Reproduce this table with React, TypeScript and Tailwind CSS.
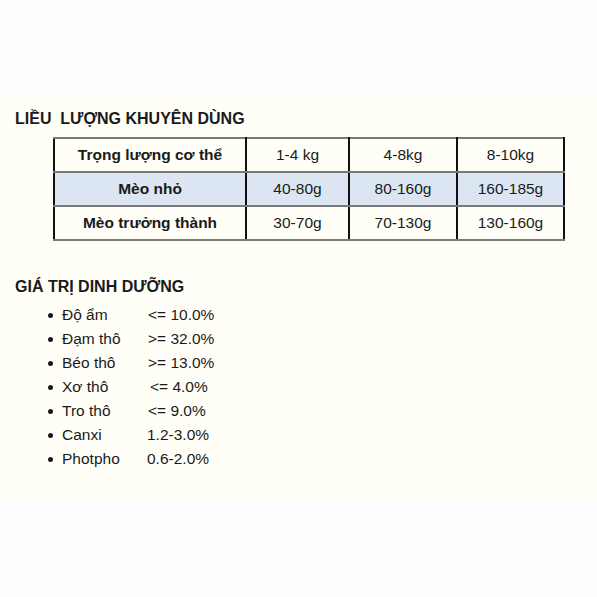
import React from 'react';

const rows = [
  { label: 'Trọng lượng cơ thể', values: ['1-4 kg', '4-8kg', '8-10kg'], shaded: false },
  { label: 'Mèo nhỏ', values: ['40-80g', '80-160g', '160-185g'], shaded: true },
  { label: 'Mèo trưởng thành', values: ['30-70g', '70-130g', '130-160g'], shaded: false },
];

const nutrients = [
  { name: 'Độ ẩm', value: '<= 10.0%', pad: 'pl-[1px]' },
  { name: 'Đạm thô', value: '>= 32.0%', pad: 'pl-[1px]' },
  { name: 'Béo thô', value: '>= 13.0%', pad: 'pl-[1px]' },
  { name: 'Xơ thô', value: '<= 4.0%', pad: 'pl-[3px]' },
  { name: 'Tro thô', value: '<= 9.0%', pad: 'pl-[1px]' },
  { name: 'Canxi', value: '1.2-3.0%', pad: 'pl-0' },
  { name: 'Photpho', value: '0.6-2.0%', pad: 'pl-0' },
];

export default function App() {
  return (
    <div className="w-full h-[597px] bg-[#fefefe] text-[#1a1a1a] font-['Liberation_Sans',Arial,sans-serif]">
      <div className="h-[93px]" />
      <div className="h-[407px] bg-[#fffff8] pl-[15px] pt-[16px]">
        <h2 className="text-[16px] font-bold leading-[20px] whitespace-pre">LIỀU  LƯỢNG KHUYÊN DÙNG</h2>

        <table className="ml-[38px] mt-[8px] border-collapse text-[15.5px]">
          <tbody>
            {rows.map((row) => (
              <tr key={row.label} className={row.shaded ? 'bg-[#dce6f2]' : ''}>
                <td className="w-[192px] h-[34px] border-y-2 border-y-[#7a7a7a] border-l-2 border-l-[#111] border-r-2 border-r-[#111] text-center font-bold">
                  {row.label}
                </td>
                <td className="w-[103px] h-[34px] border-y-2 border-y-[#7a7a7a] border-r-2 border-r-[#111] text-center">
                  {row.values[0]}
                </td>
                <td className="w-[108px] h-[34px] border-y-2 border-y-[#7a7a7a] border-r-2 border-r-[#111] text-center">
                  {row.values[1]}
                </td>
                <td className="w-[107px] h-[34px] border-y-2 border-y-[#7a7a7a] border-r-2 border-r-[#111] text-center">
                  {row.values[2]}
                </td>
              </tr>
            ))}
          </tbody>
        </table>

        <h2 className="mt-[36px] text-[16px] font-bold leading-[20px]">GIÁ TRỊ DINH DƯỠNG</h2>

        <ul className="mt-[6px] text-[15.5px] leading-[24px]">
          {nutrients.map((n) => (
            <li key={n.name} className="flex items-center">
              <span className="w-[47px] pl-[33px] flex items-center">
                <span className="block w-[5px] h-[5px] rounded-full bg-[#1a1a1a]" />
              </span>
              <span className="w-[85px]">{n.name}</span>
              <span className={n.pad}>{n.value}</span>
            </li>
          ))}
        </ul>
      </div>
    </div>
  );
}
